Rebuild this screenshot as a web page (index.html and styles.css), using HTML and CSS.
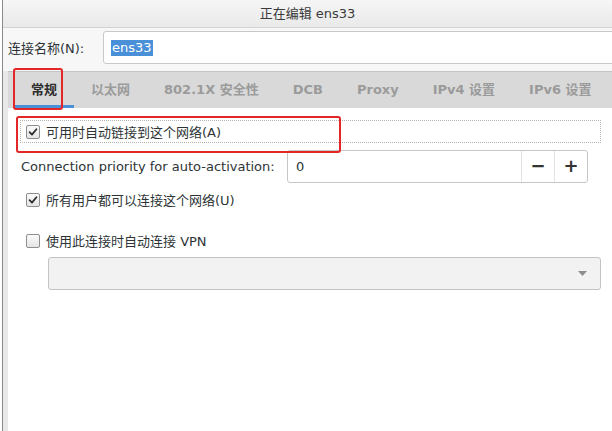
FILE: index.html
```html
<!DOCTYPE html>
<html lang="zh-CN">
<head>
    <meta charset="UTF-8">
    <title>正在编辑 ens33</title>
    <link rel="stylesheet" href="styles.css">
</head>
<body>
    <div class="window">
        <div class="titlebar">正在编辑 ens33</div>

        <div class="name-row">
            <label class="name-label">连接名称(N):</label>
            <div class="name-input"><span class="selected">ens33</span></div>
        </div>

        <div class="notebook">
            <div class="tabs">
                <div class="tab active">常规</div>
                <div class="tab">以太网</div>
                <div class="tab">802.1X 安全性</div>
                <div class="tab">DCB</div>
                <div class="tab">Proxy</div>
                <div class="tab">IPv4 设置</div>
                <div class="tab">IPv6 设置</div>
            </div>

            <div class="page">
                <div class="check-row focus">
                    <span class="check">
                        <svg width="14" height="14" viewBox="0 0 14 14"><path d="M3 7.2 L5.8 10 L11 3.8" fill="none" stroke="#2e2e2e" stroke-width="2.1" stroke-linecap="round" stroke-linejoin="round"/></svg>
                    </span>
                    <span>可用时自动链接到这个网络(A)</span>
                </div>

                <div class="priority-row">
                    <span class="priority-label">Connection priority for auto-activation:</span>
                    <div class="spin">
                        <span class="spin-value">0</span>
                        <span class="spin-btn">−</span>
                        <span class="spin-btn">+</span>
                    </div>
                </div>

                <div class="check-row users">
                    <span class="check">
                        <svg width="14" height="14" viewBox="0 0 14 14"><path d="M3 7.2 L5.8 10 L11 3.8" fill="none" stroke="#2e2e2e" stroke-width="2.1" stroke-linecap="round" stroke-linejoin="round"/></svg>
                    </span>
                    <span>所有用户都可以连接这个网络(U)</span>
                </div>

                <div class="check-row vpn">
                    <span class="check"></span>
                    <span>使用此连接时自动连接 VPN</span>
                </div>

                <div class="combo">
                    <svg width="9" height="5" viewBox="0 0 9 5"><path d="M0 0 L9 0 L4.5 5 Z" fill="#8c8c8c"/></svg>
                </div>
            </div>
        </div>

        <!-- red annotation boxes -->
        <div class="mark mark-tab"></div>
        <div class="mark mark-check"></div>
    </div>
</body>
</html>
```

FILE: styles.css
```css
body{
    margin: 0;
    width: 612px;
    height: 431px;
    overflow: hidden;
    background: #ffffff;
    font-family: "DejaVu Sans", "Noto Sans CJK SC", sans-serif;
    font-size: 13px;
    color: #2e3436;
}
.window{
    position: relative;
    margin-left: 2px;
    height: 431px;
    border-left: 1px solid #8a8a8a;
    background: #f7f7f7;
}
.titlebar{
    height: 27px;
    line-height: 27px;
    text-align: center;
    border-bottom: 1px solid #d2d2d2;
    background: linear-gradient(#f6f6f6, #e9e9e9);
    color: #3a3a3a;
}
.name-row{
    display: flex;
    align-items: center;
    padding: 3px 0 0 5px;
    height: 33px;
}
.name-label{
    width: 95px;
    color: #2e3436;
}
.name-input{
    flex: 1;
    height: 31px;
    margin-right: -10px;
    display: flex;
    align-items: center;
    padding-left: 7px;
    border: 1px solid #c9c9c9;
    border-radius: 3px;
    background: #fff;
}
.selected{
    background: #4a90d9;
    color: #fff;
    line-height: 16px;
    padding: 0 1px;
}
.notebook{
    margin-top: 7px;
    border-left: 5px solid #e8e8e8;
    height: 360px;
    background: #fff;
}
.tabs{
    display: flex;
    height: 36px;
    padding-left: 6px;
    border-top: 1px solid #c4c4c4;
    background: #d9d9d9;
    margin-right: -10px;
}
.tab{
    padding: 0 17px;
    line-height: 36px;
    font-weight: bold;
    color: #9b9b9b;
    white-space: nowrap;
}
.tab.active{
    color: #2e2e2e;
    box-shadow: inset 0 -3px 0 #4a90d9;
}
.page{
    padding: 12px 11px 0 12px;
}
.check-row{
    display: flex;
    align-items: center;
    gap: 6px;
    height: 23px;
    padding-left: 6px;
}
.check-row.focus{
    padding-left: 5px;
    border: 1px dotted #b4b4b4;
    height: 21px;
}
.check{
    width: 12px;
    height: 12px;
    border: 1px solid #8e8e8e;
    border-radius: 2px;
    background: linear-gradient(#fbfbfb, #e4e4e4);
    display: flex;
    align-items: center;
    justify-content: center;
}
.priority-row{
    display: flex;
    align-items: center;
    margin-top: 7px;
    padding-left: 1px;
}
.priority-label{
    width: 266px;
    white-space: nowrap;
}
.spin{
    display: flex;
    width: 299px;
    height: 31px;
    border: 1px solid #c6c6c6;
    border-radius: 3px;
    background: #fff;
}
.spin-value{
    flex: 1;
    padding-left: 8px;
    line-height: 31px;
}
.spin-btn{
    width: 32px;
    border-left: 1px solid #e3e3e3;
    text-align: center;
    line-height: 30px;
    font-size: 18px;
    font-weight: bold;
    color: #333;
}
.check-row.users{
    margin-top: 5px;
}
.check-row.vpn{
    margin-top: 18px;
}
.combo{
    margin: 5px 0 0 28px;
    height: 31px;
    border: 1px solid #c3c3c3;
    border-radius: 3px;
    background: #f2f2f2;
    display: flex;
    align-items: center;
    justify-content: flex-end;
    padding-right: 13px;
}
.mark{
    position: absolute;
    box-sizing: border-box;
    border: 2px solid #e32626;
    border-radius: 3px;
}
.mark-tab{
    left: 10px;
    top: 68px;
    width: 50px;
    height: 42px;
}
.mark-check{
    left: 13px;
    top: 116px;
    width: 325px;
    height: 37px;
}
```
